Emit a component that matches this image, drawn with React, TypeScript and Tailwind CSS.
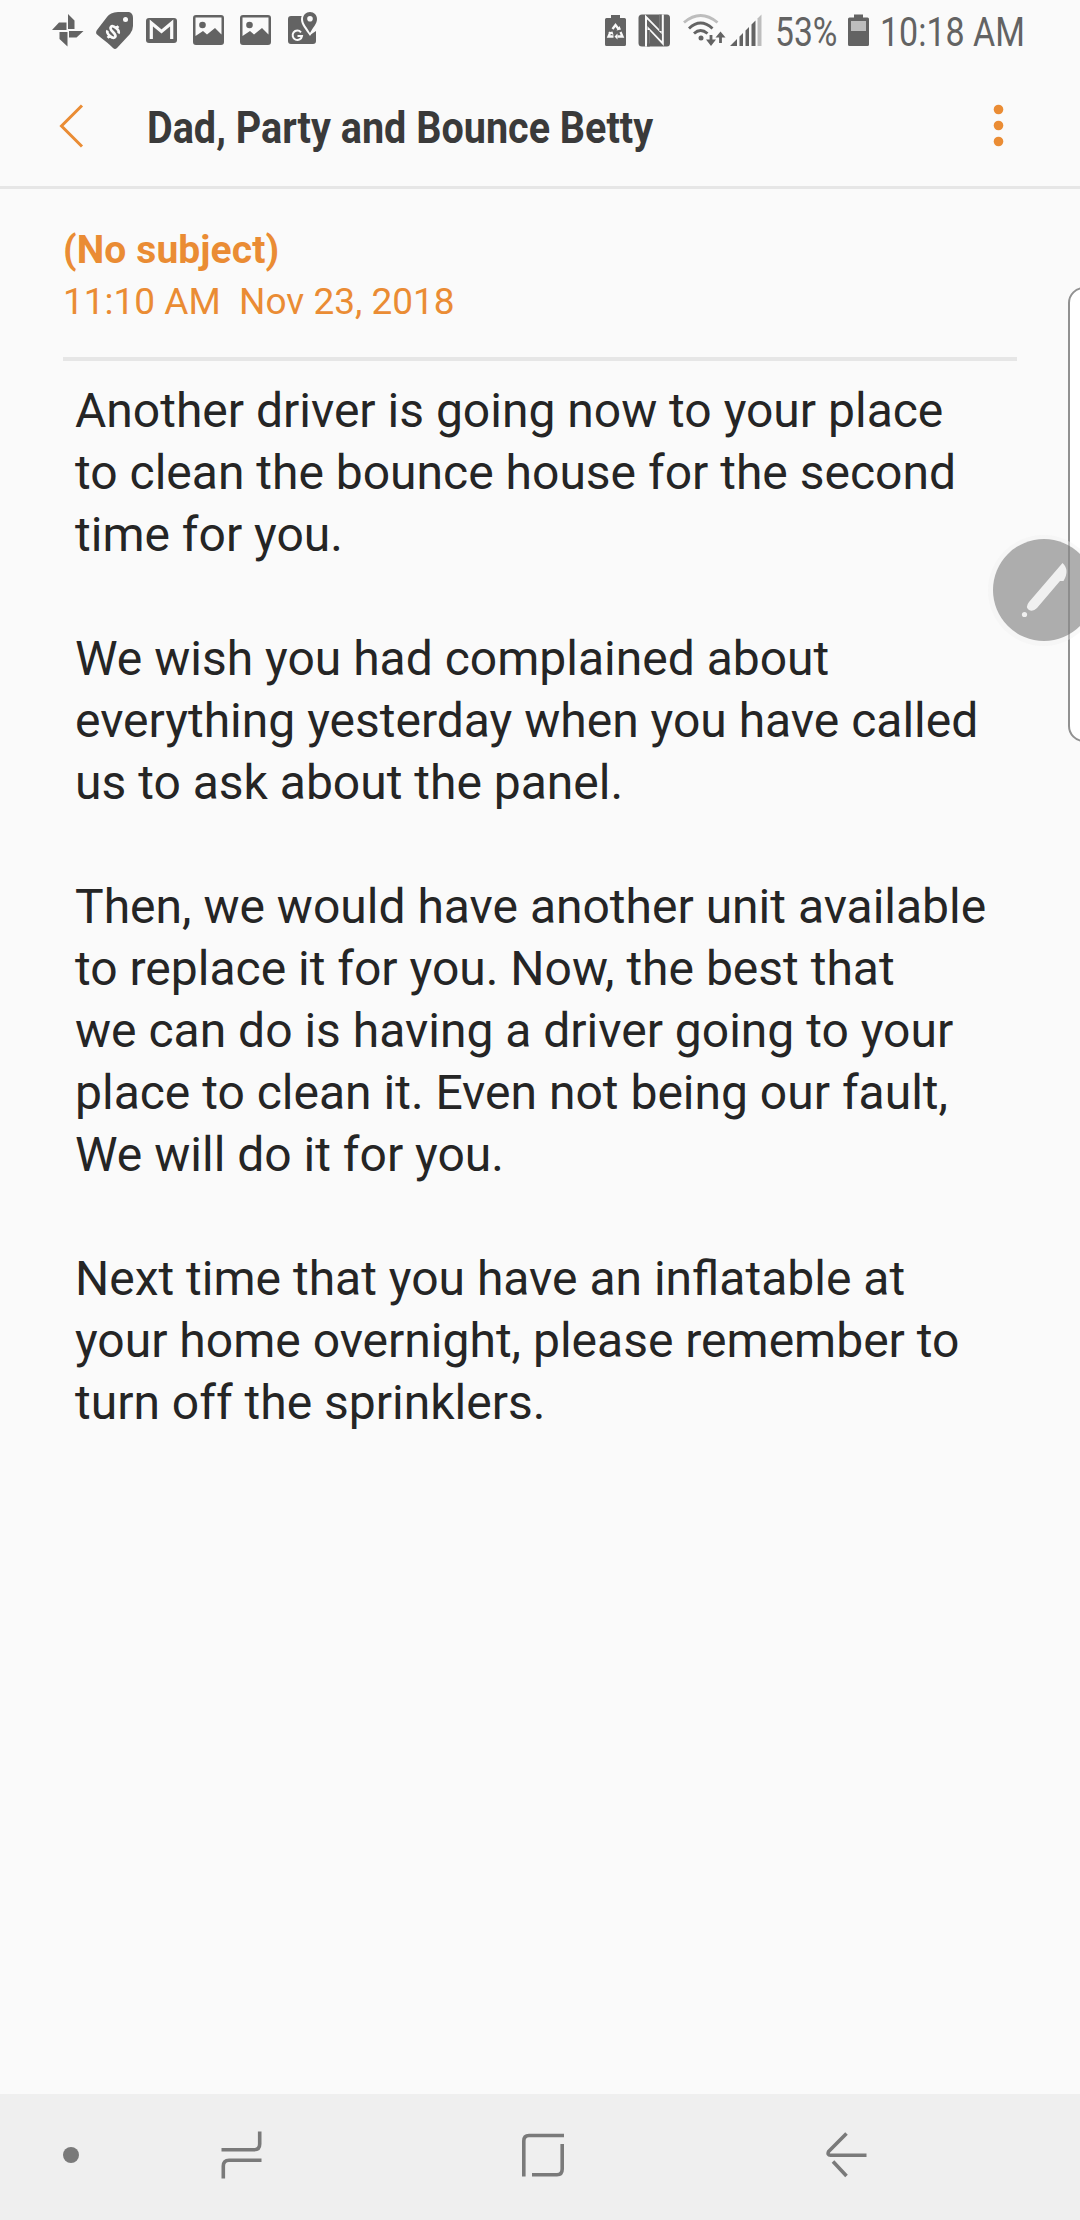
import type { ReactNode } from "react";

const lines: string[] = [
  "Another driver is going now to your place",
  "to clean the bounce house for the second",
  "time for you.",
  "",
  "We wish you had complained about",
  "everything yesterday when you have called",
  "us to ask about the panel.",
  "",
  "Then, we would have another unit available",
  "to replace it for you. Now, the best that",
  "we can do is having a driver going to your",
  "place to clean it. Even not being our fault,",
  "We will do it for you.",
  "",
  "Next time that you have an inflatable at",
  "your home overnight, please remember to",
  "turn off the sprinklers.",
];

function Icon({ w, h, className = "", children }: { w: number; h: number; className?: string; children: ReactNode }) {
  return (
    <svg width={w} height={h} viewBox={`0 0 ${w} ${h}`} className={`shrink-0 ${className}`} fill="#636363">
      {children}
    </svg>
  );
}

function Picture({ className }: { className: string }) {
  return (
    <Icon w={31} h={60} className={className}>
      <path
        fillRule="evenodd"
        d="M3 15H28Q31 15 31 18V42Q31 45 28 45H3Q0 45 0 42V18Q0 15 3 15ZM2.5 17.5V36L10 31L14 34.500L22 28L28.500 34.500V17.500Z"
      />
      <circle cx="9.500" cy="25" r="3.300" />
    </Icon>
  );
}

function StatusBar() {
  return (
    <div className="flex h-[60px] shrink-0 items-center pl-[52px] text-[#636363]">
      <Icon w={32} h={60}>
        <path d="M16 14L22.500 20.500V29H16ZM31.500 31H17V37.500H24.500ZM15.500 46.500V32H7.500V39ZM0 30L7 22.500H14.500V30Z" />
      </Icon>
      <Icon w={38} h={60} className="ml-[12px]">
        <path d="M22 12H33Q37 13 37 18V26Q37 30 34 34L21 48Q19 50 17 48Q14 45 11 42.500Q5 38 0.500 34Q-0.500 32 1 30L11 17Q14 12.500 22 12Z" />
        <circle cx="29.500" cy="19.500" r="2.500" fill="#fafafa" />
        <g transform="translate(17 32) rotate(42)" fill="none" stroke="#fafafa" strokeWidth="2.700">
          <path d="M5 -2.500Q4.500 -5 0 -5Q-5 -5 -5 -2.500Q-5 -0.300 0 0Q5 0.300 5 2.500Q5 5 0 5Q-4.500 5 -5 2.500M0 -8V-4.500M0 4.500V8" />
        </g>
      </Icon>
      <Icon w={31} h={60} className="ml-[12px]">
        <rect y="18" width="31" height="25" rx="3" />
        <path d="M5.300 39V23L15.500 31.500L25.700 23V39" fill="none" stroke="#fafafa" strokeWidth="3.200" />
      </Icon>
      <Picture className="ml-[16px]" />
      <Picture className="ml-[16px]" />
      <Icon w={31} h={60} className="ml-[17px]">
        <path d="M3 16H14L22 35L28 31V41Q28 44 25 44H3Q0 44 0 41V19Q0 16 3 16Z" />
        <path
          d="M22 10.500C17 10.500 13 14.500 13 19.500C13 25 18 30 22 36C26 30 31 25 31 19.500C31 14.500 27 10.500 22 10.500Z"
          fill="#fafafa"
        />
        <path
          fillRule="evenodd"
          d="M22 12C18 12 15 15 15 19C15 24 19 27 22 33C25 27 29 24 29 19C29 15 26 12 22 12ZM22 16A2.800 2.800 0 1 0 22 21.600A2.800 2.800 0 1 0 22 16Z"
        />
        <path d="M13 32.300A4.700 4.700 0 1 0 14 36H9.500" fill="none" stroke="#fafafa" strokeWidth="2" />
      </Icon>

      <Icon w={21} h={60} className="ml-[286px]">
        <path d="M6 15H15V18H19.500Q21 18 21 19.500V44.500Q21 46 19.500 46H1.500Q0 46 0 44.500V19.500Q0 18 1.500 18H6Z" />
        <path
          d="M7.500 29L10.500 25L13.500 29M15.500 32L17.500 36.500H12.500M8.500 36.500H3.500L5.500 32"
          fill="none"
          stroke="#fafafa"
          strokeWidth="2.300"
        />
        <path d="M11.500 30.500L16 29.500L14.500 26ZM12.500 33.500V39.500L9.500 36.500ZM3 32.500L7.500 31.500L8.500 35Z" fill="#fafafa" />
      </Icon>
      <Icon w={33} h={60} className="ml-[12px]">
        <path d="M4 14.500H29Q32 14.500 32 18V43Q32 46.500 29 46.500H4Q0.500 46.500 0.500 43V18Q0.500 14.500 4 14.500Z" />
        <path d="M8 46.500V17L22.500 32V14.500M10.500 43.500V28L24.800 43.500V14.500" fill="none" stroke="#fafafa" strokeWidth="2" />
        <path d="M9.200 19.500L23.700 34V40.800L9.200 26Z" />
        <path d="M9.200 30H11.700V46.500H9.200ZM21.300 14.500H23.700V31H21.300Z" />
      </Icon>
      <Icon w={44} h={60} className="ml-[12px]">
        <g fill="none" strokeWidth="2.900">
          <path d="M1 22.500Q17.500 8.500 34.500 22.500" stroke="#bdbdbd" />
          <path d="M6 28.500Q17.500 17.500 29.500 28.500M11 33.500Q17.500 27.500 24.500 33.500" stroke="#636363" />
          <path d="M28 35V43M37.500 43V34" stroke="#636363" strokeWidth="2.800" />
        </g>
        <circle cx="18" cy="38" r="2.500" />
        <path d="M23 39.500H33L28 46ZM32.500 37.500H42.500L37.500 31.500Z" />
      </Icon>
      <Icon w={32} h={60} className="ml-[3px]">
        <path d="M0 46L7 39V46ZM9.500 36.500L13 33V46H9.500ZM15.500 30.500L19 27V46H15.500ZM21.500 24.500L25.500 20.500V46H21.500Z" />
        <path d="M27.500 18.500L31.500 14.500V46H27.500Z" fill="#bdbdbd" />
      </Icon>
      <span className="ml-[13px] w-[73px] shrink-0 pt-[6px]">
        <span className="block origin-left scale-x-[0.84] whitespace-nowrap font-['Roboto'] text-[40px] leading-[66px]">53%</span>
      </span>
      <Icon w={21} h={60}>
        <path d="M6 14.500H15V17.500H19.500Q21 17.500 21 19V44.500Q21 46 19.500 46H1.500Q0 46 0 44.500V19Q0 17.500 1.500 17.500H6Z" />
        <path d="M3 21H18V31H3Z" fill="#bdbdbd" />
      </Icon>
      <span className="ml-[11px] w-[150px] shrink-0 pt-[6px]">
        <span className="block origin-left scale-x-[0.85] whitespace-nowrap font-['Roboto'] text-[40px] leading-[66px]">10:18 AM</span>
      </span>
    </div>
  );
}

function Header() {
  return (
    <header className="flex h-[129px] shrink-0 items-center border-b-[3px] border-[#e6e6e6] pl-[59px] pt-[6px]">
      <svg width="25" height="44" viewBox="0 0 25 44" fill="none" stroke="#ea8c34" strokeWidth="3">
        <path d="M23 1.500L2.500 22L23 42.500" />
      </svg>
      <h1 className="ml-[63px] w-[841px] whitespace-nowrap pt-[3px] font-['Roboto'] text-[45px] font-bold leading-[60px] text-[#3a3a3a]">
        <span className="inline-block origin-left scale-x-[0.879]">Dad, Party and Bounce Betty</span>
      </h1>
      <svg width="20" height="44" viewBox="0 0 20 44" fill="#ea8c34">
        <circle cx="10.500" cy="5.500" r="4.800" />
        <circle cx="10.500" cy="21.500" r="4.800" />
        <circle cx="10.500" cy="37.500" r="4.800" />
      </svg>
    </header>
  );
}

function NavBar() {
  return (
    <nav className="flex h-[126px] shrink-0 items-center bg-[#efefef] pl-[63px]">
      <div className="mt-[-4px] size-4 rounded-full bg-[#7a7a7a]" />
      <svg width="42" height="126" viewBox="0 0 42 126" className="ml-[142px]" fill="none" stroke="#7a7a7a" strokeWidth="3.600">
        <path d="M0.500 55.800H33Q38.700 55.800 38.700 50V37.500M40.500 66.200H8Q2.300 66.200 2.300 72V84.500" />
      </svg>
      <svg width="43" height="126" viewBox="0 0 43 126" className="ml-[259px]" fill="none" stroke="#7a7a7a" strokeWidth="3.600">
        <path d="M1.800 82.500V47Q1.800 41.500 7 41.500H42M40.200 50V75Q40.200 80.700 35 80.700H10" />
      </svg>
      <svg width="42" height="126" viewBox="0 0 42 126" className="ml-[261px]" fill="none" stroke="#7a7a7a" strokeWidth="3.600">
        <path d="M20.500 39.500L2.600 57.500Q1 61.200 4.500 61.200H40.500M7 67.500L20.500 82" />
      </svg>
    </nav>
  );
}

export default function App() {
  return (
    <div className="relative flex h-[2220px] w-[1080px] flex-col overflow-hidden bg-[#fafafa] font-['Roboto',sans-serif]">
      <StatusBar />
      <Header />
      <main className="flex-1 px-[63px] pt-[36px]">
        <section className="h-[136px] border-b-4 border-[#e6e6e6] text-[#ea8c34]">
          <p className="whitespace-pre text-[39px] font-bold leading-[50px] tracking-[0.1px]">(No subject)</p>
          <p className="whitespace-pre text-[37px] leading-[53px]">11:10 AM  Nov 23, 2018</p>
        </section>
        <div className="pl-[12px] pt-[19px] text-[48px] leading-[62px] text-[#252525]">
          {lines.map((line, i) => (
            <p key={i} className="h-[62px] whitespace-nowrap">
              {line}
            </p>
          ))}
        </div>
      </main>
      <NavBar />
      <div className="absolute left-[1068px] top-[287px] h-[455px] w-[40px] rounded-[16px] border-2 border-[#919191] bg-white" />
      <div className="absolute left-[988px] top-[535px] size-[111px] rounded-full bg-[#f0f0f0]/40" />
      <div className="absolute left-[992.5px] top-[539px] size-[102px] rounded-full bg-[#646464]/50">
        <svg width="102" height="102" viewBox="0 0 102 102" fill="#f0f0f0">
          <path d="M69.500 24Q77 31 70.500 42H67L44 69Q40 73 36 71Q32 68 36 63Z" />
          <circle cx="31.500" cy="75.500" r="2.600" />
        </svg>
      </div>
    </div>
  );
}
